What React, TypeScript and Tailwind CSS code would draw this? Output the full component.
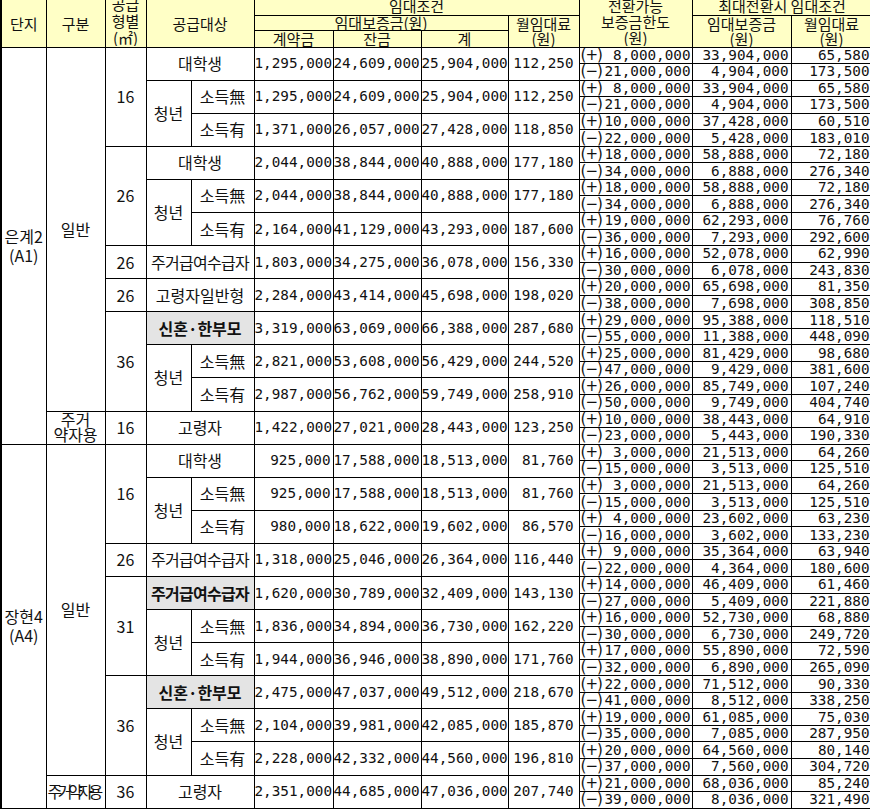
import React from 'react';

type Target = { full: string; hl?: boolean; squeeze?: boolean } | { income: string; youth?: boolean };

type Row = {
  danji?: { a: string; b: string; span: number };
  gubun?: { label: string; span: number; kind?: 'wrap' | 'squeeze' };
  size?: { label: string; span: number };
  t: Target;
  n: [string, string, string, string];
  c: [string, string];
  d: [string, string];
  r: [string, string];
};

const rows: Row[] = [
  // 은계2 (A1)
  { danji: { a: '은계2', b: '(A1)', span: 12 }, gubun: { label: '일반', span: 11 }, size: { label: '16', span: 3 },
    t: { full: '대학생' }, n: ['1,295,000', '24,609,000', '25,904,000', '112,250'], c: ['8,000,000', '21,000,000'], d: ['33,904,000', '4,904,000'], r: ['65,580', '173,500'] },
  { t: { income: '소득無', youth: true }, n: ['1,295,000', '24,609,000', '25,904,000', '112,250'], c: ['8,000,000', '21,000,000'], d: ['33,904,000', '4,904,000'], r: ['65,580', '173,500'] },
  { t: { income: '소득有' }, n: ['1,371,000', '26,057,000', '27,428,000', '118,850'], c: ['10,000,000', '22,000,000'], d: ['37,428,000', '5,428,000'], r: ['60,510', '183,010'] },
  { size: { label: '26', span: 3 }, t: { full: '대학생' }, n: ['2,044,000', '38,844,000', '40,888,000', '177,180'], c: ['18,000,000', '34,000,000'], d: ['58,888,000', '6,888,000'], r: ['72,180', '276,340'] },
  { t: { income: '소득無', youth: true }, n: ['2,044,000', '38,844,000', '40,888,000', '177,180'], c: ['18,000,000', '34,000,000'], d: ['58,888,000', '6,888,000'], r: ['72,180', '276,340'] },
  { t: { income: '소득有' }, n: ['2,164,000', '41,129,000', '43,293,000', '187,600'], c: ['19,000,000', '36,000,000'], d: ['62,293,000', '7,293,000'], r: ['76,760', '292,600'] },
  { size: { label: '26', span: 1 }, t: { full: '주거급여수급자', squeeze: true }, n: ['1,803,000', '34,275,000', '36,078,000', '156,330'], c: ['16,000,000', '30,000,000'], d: ['52,078,000', '6,078,000'], r: ['62,990', '243,830'] },
  { size: { label: '26', span: 1 }, t: { full: '고령자일반형' }, n: ['2,284,000', '43,414,000', '45,698,000', '198,020'], c: ['20,000,000', '38,000,000'], d: ['65,698,000', '7,698,000'], r: ['81,350', '308,850'] },
  { size: { label: '36', span: 3 }, t: { full: '신혼·한부모', hl: true }, n: ['3,319,000', '63,069,000', '66,388,000', '287,680'], c: ['29,000,000', '55,000,000'], d: ['95,388,000', '11,388,000'], r: ['118,510', '448,090'] },
  { t: { income: '소득無', youth: true }, n: ['2,821,000', '53,608,000', '56,429,000', '244,520'], c: ['25,000,000', '47,000,000'], d: ['81,429,000', '9,429,000'], r: ['98,680', '381,600'] },
  { t: { income: '소득有' }, n: ['2,987,000', '56,762,000', '59,749,000', '258,910'], c: ['26,000,000', '50,000,000'], d: ['85,749,000', '9,749,000'], r: ['107,240', '404,740'] },
  { gubun: { label: '주거약자용', span: 1, kind: 'wrap' }, size: { label: '16', span: 1 }, t: { full: '고령자' }, n: ['1,422,000', '27,021,000', '28,443,000', '123,250'], c: ['10,000,000', '23,000,000'], d: ['38,443,000', '5,443,000'], r: ['64,910', '190,330'] },
  // 장현4 (A4)
  { danji: { a: '장현4', b: '(A4)', span: 11 }, gubun: { label: '일반', span: 10 }, size: { label: '16', span: 3 },
    t: { full: '대학생' }, n: ['925,000', '17,588,000', '18,513,000', '81,760'], c: ['3,000,000', '15,000,000'], d: ['21,513,000', '3,513,000'], r: ['64,260', '125,510'] },
  { t: { income: '소득無', youth: true }, n: ['925,000', '17,588,000', '18,513,000', '81,760'], c: ['3,000,000', '15,000,000'], d: ['21,513,000', '3,513,000'], r: ['64,260', '125,510'] },
  { t: { income: '소득有' }, n: ['980,000', '18,622,000', '19,602,000', '86,570'], c: ['4,000,000', '16,000,000'], d: ['23,602,000', '3,602,000'], r: ['63,230', '133,230'] },
  { size: { label: '26', span: 1 }, t: { full: '주거급여수급자', squeeze: true }, n: ['1,318,000', '25,046,000', '26,364,000', '116,440'], c: ['9,000,000', '22,000,000'], d: ['35,364,000', '4,364,000'], r: ['63,940', '180,600'] },
  { size: { label: '31', span: 3 }, t: { full: '주거급여수급자', hl: true, squeeze: true }, n: ['1,620,000', '30,789,000', '32,409,000', '143,130'], c: ['14,000,000', '27,000,000'], d: ['46,409,000', '5,409,000'], r: ['61,460', '221,880'] },
  { t: { income: '소득無', youth: true }, n: ['1,836,000', '34,894,000', '36,730,000', '162,220'], c: ['16,000,000', '30,000,000'], d: ['52,730,000', '6,730,000'], r: ['68,880', '249,720'] },
  { t: { income: '소득有' }, n: ['1,944,000', '36,946,000', '38,890,000', '171,760'], c: ['17,000,000', '32,000,000'], d: ['55,890,000', '6,890,000'], r: ['72,590', '265,090'] },
  { size: { label: '36', span: 3 }, t: { full: '신혼·한부모', hl: true }, n: ['2,475,000', '47,037,000', '49,512,000', '218,670'], c: ['22,000,000', '41,000,000'], d: ['71,512,000', '8,512,000'], r: ['90,330', '338,250'] },
  { t: { income: '소득無', youth: true }, n: ['2,104,000', '39,981,000', '42,085,000', '185,870'], c: ['19,000,000', '35,000,000'], d: ['61,085,000', '7,085,000'], r: ['75,030', '287,950'] },
  { t: { income: '소득有' }, n: ['2,228,000', '42,332,000', '44,560,000', '196,810'], c: ['20,000,000', '37,000,000'], d: ['64,560,000', '7,560,000'], r: ['80,140', '304,720'] },
  { gubun: { label: '주거약자용', span: 1, kind: 'squeeze' }, size: { label: '36', span: 1 }, t: { full: '고령자' }, n: ['2,351,000', '44,685,000', '47,036,000', '207,740'], c: ['21,000,000', '39,000,000'], d: ['68,036,000', '8,036,000'], r: ['85,240', '321,490'] },
];

const td = 'border border-black p-0 overflow-visible leading-[15px] text-[14px]';
const num = "block font-['DejaVu_Sans_Mono',monospace] text-[14.3px] leading-[15px] h-[15px] whitespace-nowrap text-[#111]";
const numIn = "font-['DejaVu_Sans_Mono',monospace] text-[14.3px] leading-[15px] whitespace-nowrap text-[#111]";
const kr = "font-['Noto_Sans_CJK_KR',sans-serif]";
const th = `border border-black p-0 bg-[#ffffc6] font-normal text-center ${kr} text-[15px] leading-[15px] text-[#111]`;

function Sign({ s }: { s: string }) {
  return <span className="font-['DejaVu_Sans',sans-serif] text-[15px] leading-[15px] tracking-[-1px] text-[#111]">({s})</span>;
}

function Body() {
  return (
    <>
      {rows.flatMap((m, i) => {
        const t = m.t;
        return [
          <tr key={`${i}a`} className="h-[16.56px]">
            {m.danji && (
              <td rowSpan={m.danji.span * 2} className={`${td} border-l-2 text-center align-middle ${kr} text-[16px] leading-[19px] text-[#111]`}>
                <div>{m.danji.a}</div>
                <div>{m.danji.b}</div>
              </td>
            )}
            {m.gubun && (
              <td rowSpan={m.gubun.span * 2} className={`${td} text-center align-middle ${kr} text-[16px] text-[#111]`}>
                {m.gubun.kind === 'wrap' ? (
                  <div className="h-[31px] overflow-hidden flex flex-col justify-end leading-[15px] pb-[1px]">
                    <div>주거</div>
                    <div>약자용</div>
                  </div>
                ) : m.gubun.kind === 'squeeze' ? (
                  <div className="whitespace-nowrap tracking-[-4.5px] text-left pl-[1px]">{m.gubun.label}</div>
                ) : (
                  m.gubun.label
                )}
              </td>
            )}
            {m.size && (
              <td rowSpan={m.size.span * 2} className={`${td} text-center align-middle ${kr} text-[16px] text-[#111]`}>
                {m.size.label}
              </td>
            )}
            {'full' in t ? (
              <td
                colSpan={2}
                rowSpan={2}
                className={`${td} text-center align-middle ${kr} text-[16px] whitespace-nowrap text-[#111] ${t.hl ? 'bg-[#e4e4e4] font-bold' : ''} ${t.squeeze ? 'tracking-[-0.7px]' : ''}`}
              >
                {t.full}
              </td>
            ) : (
              <>
                {t.youth && (
                  <td rowSpan={4} className={`${td} text-center align-middle ${kr} text-[16px] text-[#111]`}>
                    청년
                  </td>
                )}
                <td rowSpan={2} className={`${td} text-center align-middle ${kr} text-[16px] text-[#111]`}>
                  {t.income}
                </td>
              </>
            )}
            <td rowSpan={2} className={`${td} text-right align-middle pr-[2px]`}><span className={num}>{m.n[0]}</span></td>
            <td rowSpan={2} className={`${td} text-right align-middle pr-[2px]`}><span className={num}>{m.n[1]}</span></td>
            <td rowSpan={2} className={`${td} text-right align-middle pr-[1px]`}><span className={num}>{m.n[2]}</span></td>
            <td rowSpan={2} className={`${td} text-right align-middle pr-[5px]`}><span className={num}>{m.n[3]}</span></td>
            <td className={td}>
              <div className="flex items-center justify-between pl-[1px] pr-[1px] h-[15px] overflow-visible">
                <Sign s="+" />
                <span className={numIn}>{m.c[0]}</span>
              </div>
            </td>
            <td className={`${td} text-right pr-[2px]`}><span className={num}>{m.d[0]}</span></td>
            <td className={`${td} text-right pr-[2px]`}><span className={num}>{m.r[0]}</span></td>
          </tr>,
          <tr key={`${i}b`} className="h-[16.56px]">
            <td className={td}>
              <div className="flex items-center justify-between pl-[1px] pr-[1px] h-[15px] overflow-visible">
                <Sign s="−" />
                <span className={numIn}>{m.c[1]}</span>
              </div>
            </td>
            <td className={`${td} text-right pr-[2px]`}><span className={num}>{m.d[1]}</span></td>
            <td className={`${td} text-right pr-[2px]`}><span className={num}>{m.r[1]}</span></td>
          </tr>,
        ];
      })}
    </>
  );
}

export default function App() {
  return (
    <div className="w-[870px] h-[810px] overflow-hidden bg-white">
      <table className="w-[871px] table-fixed border-collapse">
        <colgroup>
          <col className="w-[45px]" />
          <col className="w-[59px]" />
          <col className="w-[41px]" />
          <col className="w-[45px]" />
          <col className="w-[63px]" />
          <col className="w-[79px]" />
          <col className="w-[88px]" />
          <col className="w-[87px]" />
          <col className="w-[71px]" />
          <col className="w-[113px]" />
          <col className="w-[99px]" />
          <col className="w-[81px]" />
        </colgroup>
        <thead>
          <tr className="h-[15px]">
            <th rowSpan={3} className={`${th} border-t-0 border-l-2`}>단지</th>
            <th rowSpan={3} className={`${th} border-t-0`}>구분</th>
            <th rowSpan={3} className={`${th} border-t-0`}>
              <div className="h-[46px] overflow-hidden flex flex-col justify-end leading-[17px]">
                <div>공급</div>
                <div>형별</div>
                <div>(㎡)</div>
              </div>
            </th>
            <th rowSpan={3} colSpan={2} className={`${th} border-t-0`}>공급대상</th>
            <th colSpan={4} className={`${th} border-t-0`}>
              <div className="h-[14px] overflow-hidden flex items-end justify-center">
                <div className="leading-[16px]">임대조건</div>
              </div>
            </th>
            <th rowSpan={3} className={`${th} border-t-0`}>
              <div className="h-[46px] overflow-hidden flex flex-col justify-end leading-[16px]">
                <div>전환가능</div>
                <div>보증금한도</div>
                <div>(원)</div>
              </div>
            </th>
            <th colSpan={2} className={`${th} border-t-0`}>
              <div className="h-[14px] overflow-hidden flex items-end justify-center">
                <div className="leading-[16px] whitespace-nowrap">최대전환시 임대조건</div>
              </div>
            </th>
          </tr>
          <tr className="h-[15px]">
            <th colSpan={3} className={th}>
              <div className="h-[14px] overflow-hidden flex items-end justify-center">
                <div className="leading-[15px]">임대보증금(원)</div>
              </div>
            </th>
            <th rowSpan={2} className={th}>
              <div className="leading-[15px]">월임대료</div>
              <div className="leading-[15px]">(원)</div>
            </th>
            <th rowSpan={2} className={th}>
              <div className="leading-[15px]">임대보증금</div>
              <div className="leading-[15px]">(원)</div>
            </th>
            <th rowSpan={2} className={th}>
              <div className="leading-[15px]">월임대료</div>
              <div className="leading-[15px]">(원)</div>
            </th>
          </tr>
          <tr className="h-[17px]">
            <th className={th}><div className="leading-[16px]">계약금</div></th>
            <th className={th}><div className="leading-[16px]">잔금</div></th>
            <th className={th}><div className="leading-[16px]">계</div></th>
          </tr>
        </thead>
        <tbody>
          <Body />
        </tbody>
      </table>
    </div>
  );
}
